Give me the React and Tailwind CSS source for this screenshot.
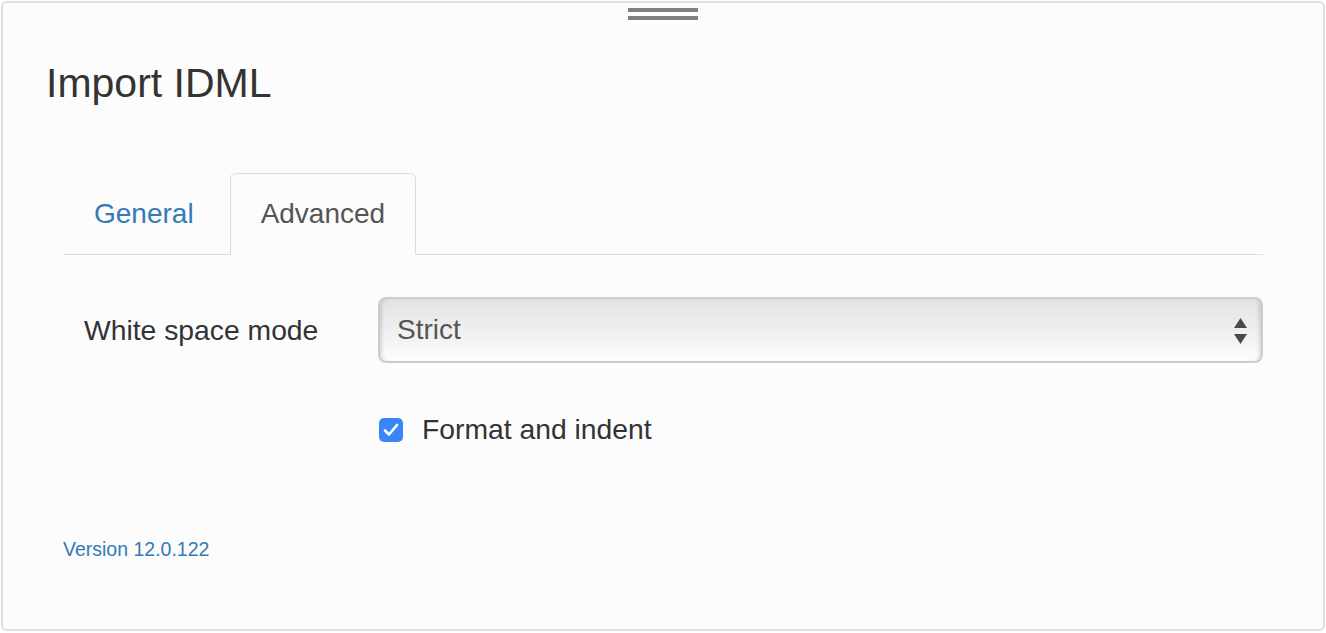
import { useState } from 'react';

export default function App() {
  const [tab, setTab] = useState('advanced');
  const [formatIndent, setFormatIndent] = useState(true);

  return (
    <div className="h-[633px] w-full bg-white p-px pb-[2px] font-['Liberation_Sans',Arial,sans-serif]">
      <div className="h-full rounded-[6px] border-2 border-[#dedede] bg-[#fcfcfc]">
        {/* drag handle */}
        <div className="flex flex-col items-center gap-[4px] pt-[5px]">
          <div className="h-[4px] w-[70px] bg-[#808080]" />
          <div className="h-[4px] w-[70px] bg-[#808080]" />
        </div>

        <h1 className="mt-[43px] pl-[43px] text-[41px] leading-[41px] font-light text-[#333]">Import IDML</h1>

        <div className="mx-[60px] mt-[69px]">
          {/* tabs */}
          <div className="flex border-b border-[#dddddd] text-[28px] leading-[40px]">
            <TabButton active={tab === 'general'} onClick={() => setTab('general')}>General</TabButton>
            <div className="w-[5px]" />
            <TabButton active={tab === 'advanced'} onClick={() => setTab('advanced')}>Advanced</TabButton>
          </div>

          {/* form */}
          <div className="mt-[42px] flex items-center">
            <label className="w-[315px] shrink-0 pl-[21px] text-[28.3px] leading-[40px] text-[#333]">White space mode</label>
            <div className="relative h-[66px] flex-1 rounded-[8px] border-2 border-[#cccccc] bg-gradient-to-b from-[#e3e3e3] via-[#efefef] to-[#fdfdfd] shadow-[inset_4px_0_4px_-3px_rgba(0,0,0,0.18),inset_-4px_0_4px_-3px_rgba(0,0,0,0.18)]">
              <div className="flex h-full items-center pl-[17px] text-[28px] leading-[40px] text-[#555]">Strict</div>
              <svg className="absolute right-[14px] top-[19px]" width="13" height="26" viewBox="0 0 13 26">
                <path d="M6.5 0 L13 10 L0 10 Z" fill="#4a4a4a" />
                <path d="M0 16 L13 16 L6.5 26 Z" fill="#4a4a4a" />
              </svg>
            </div>
          </div>

          <div className="mt-[46px] flex items-start pl-[316px]">
            <button
              type="button"
              onClick={() => setFormatIndent((v) => !v)}
              className={`mt-[9px] grid h-[24px] w-[24px] place-items-center rounded-[5px] ${
                formatIndent ? 'bg-[#3b86f7]' : 'border border-[#aaa] bg-white'
              }`}
            >
              {formatIndent && (
                <svg width="16" height="14" viewBox="0 0 16 14">
                  <path d="M2 7.5 L6 11.5 L14 2" fill="none" stroke="white" strokeWidth="2.6" strokeLinecap="round" strokeLinejoin="round" />
                </svg>
              )}
            </button>
            <span className="ml-[19px] text-[28.3px] leading-[40px] text-[#333]">Format and indent</span>
          </div>

          <div className="mt-[87px] text-[19.5px] leading-[26px] text-[#337ab7]">Version 12.0.122</div>
        </div>
      </div>
    </div>
  );
}

function TabButton({ active, onClick, children }) {
  return (
    <button
      type="button"
      onClick={onClick}
      className={`-mb-px rounded-t-[6px] border px-[30px] pt-[20px] pb-[20px] ${
        active
          ? 'border-[#dddddd] border-b-transparent bg-[#fcfcfc] text-[#555]'
          : 'border-transparent text-[#337ab7]'
      }`}
    >
      {children}
    </button>
  );
}
